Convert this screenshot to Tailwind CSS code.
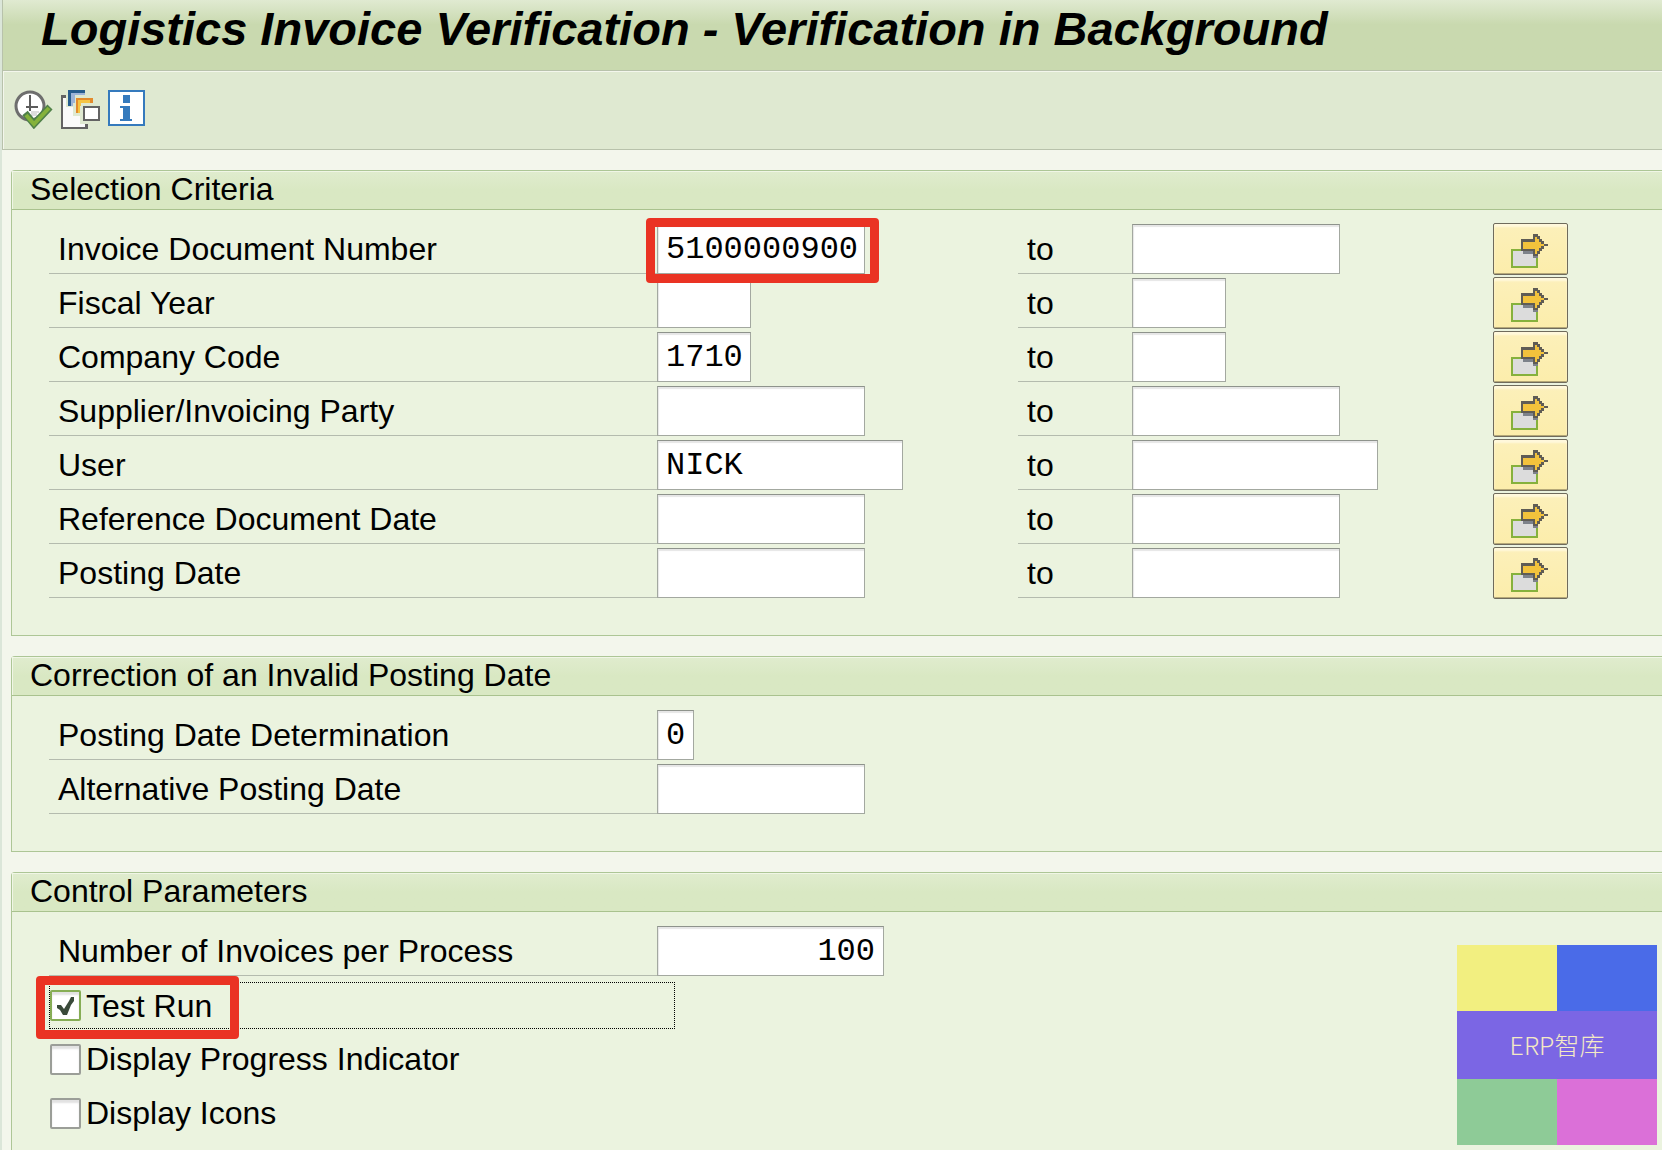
<!DOCTYPE html>
<html lang="en">
  <head>
    <meta charset="utf-8" />
    <title>Logistics Invoice Verification - Verification in Background</title>
    <script src="https://cdn.jsdelivr.net/npm/@tailwindcss/browser@4"></script>
  </head>

  <body class="relative min-h-screen flex flex-col overflow-x-hidden bg-[#f3f6ec] border-l-2 border-[#dbe6d9] text-black text-[32px] leading-[50px] font-['Liberation_Sans',Arial,sans-serif]">
    <!-- Title -->
    <header class="h-[71px] pl-[38px] border-l border-b border-[#b8c2ab] bg-linear-to-b from-[#e0ead1] to-[#c9d9af] to-35%">
      <h1 class="text-[47px] leading-[58px] font-bold italic whitespace-nowrap">Logistics Invoice Verification - Verification in Background</h1>
    </header>

    <!-- Toolbar -->
    <div class="h-[79px] pl-[11px] pt-[19px] flex items-start gap-2 border-l border-b border-[#b8c2ab] bg-[#dfe9d1] shadow-[inset_1px_1px_0_#f3f6ec]">
      <button aria-label="Execute">
        <svg class="block w-[39px] h-[39px]" viewBox="0 0 39 39">
          <circle cx="16" cy="16" r="14" fill="#fff" stroke="#6e6e6e" stroke-width="3" />
          <path d="M17 21h8v2h-2v3h-6z" fill="#ddd" />
          <path d="M15 5h2v11h7v2h-7v3h-2v-3h-3v-2h3z" fill="#5c5c5c" />
          <path d="M11 23l9 11L36 17" fill="none" stroke="#4f8049" stroke-width="7" />
          <path d="M12 25l8 9L35 18" fill="none" stroke="#85b23b" stroke-width="4" />
        </svg>
      </button>
      <button aria-label="Get variant">
        <svg class="block w-[39px] h-[39px]" viewBox="0 0 39 39" shape-rendering="crispEdges">
          <path d="M2 8h3v9h7v9h7v8h5v3H2z" fill="#fafafa" />
          <path d="M0 5h5v3H2v29h22v-3h3v5H0z" fill="#636363" />
          <path d="M7 0h17v3H10v13H7z" fill="#275d8e" />
          <path d="M10 3h14v2H14v8h-2v3h-2z" fill="#9db4d8" />
          <path d="M15 8h17v5h-3v-3H17v13h-2z" fill="#e38b2c" />
          <path d="M17 10h12v3h-9v3h-1v7h-2z" fill="#f5c544" />
          <path d="M23 17h15v13H23z" fill="#fff" stroke="#636363" stroke-width="2" />
        </svg>
      </button>
      <button aria-label="Information">
        <svg class="block w-[37px] h-[36px]" viewBox="0 0 37 36" shape-rendering="crispEdges">
          <path d="M1 1h35v34H1z" fill="#fff" stroke="#357abd" stroke-width="2" />
          <path d="M15 5h7v8h-7zM12 16h10v13h2v2H12v-2h3V18h-3z" fill="#357abd" />
        </svg>
      </button>
    </div>

    <main class="flex-1 flex flex-col gap-5 pl-[9px] pt-5">
      <!-- Selection criteria -->
      <section class="border-l border-y border-[#adc696] rounded-tl-sm bg-[#ebf3df]">
        <h2 class="h-[39px] pl-[18px] leading-[36px] border-b border-[#a9c28e] bg-linear-to-b from-[#e0ecce] to-[#d9e8c3] to-50% shadow-[inset_1px_1px_0_#f0f6e6]">Selection Criteria</h2>
        <div id="criteria" class="pl-[37px] pt-[14px] pb-[37px] flex flex-col gap-1"></div>
      </section>

      <!-- Correction of posting date -->
      <section class="border-l border-y border-[#adc696] rounded-tl-sm bg-[#ebf3df]">
        <h2 class="h-[39px] pl-[18px] leading-[36px] border-b border-[#a9c28e] bg-linear-to-b from-[#e0ecce] to-[#d9e8c3] to-50% shadow-[inset_1px_1px_0_#f0f6e6]">Correction of an Invalid Posting Date</h2>
        <div class="pl-[37px] pt-[14px] pb-[37px] flex flex-col gap-1">
          <div class="flex h-[50px]">
            <label for="determination" class="w-[608px] pl-[9px] border-b border-[#b4bbae]">Posting Date Determination</label>
            <input id="determination" value="0" class="w-[37px] pl-2 pt-[2px] bg-white border border-[#a3a8a0] border-t-[#8e938c] shadow-[inset_1px_2px_1px_#e6e6e6] font-['Liberation_Mono',monospace] outline-none">
          </div>
          <div class="flex h-[50px]">
            <label for="alternative" class="w-[608px] pl-[9px] border-b border-[#b4bbae]">Alternative Posting Date</label>
            <input id="alternative" class="w-[208px] pl-2 pt-[2px] bg-white border border-[#a3a8a0] border-t-[#8e938c] shadow-[inset_1px_2px_1px_#e6e6e6] font-['Liberation_Mono',monospace] outline-none">
          </div>
        </div>
      </section>

      <!-- Control parameters -->
      <section class="flex-1 border-l border-t border-[#adc696] rounded-tl-sm bg-[#ebf3df]">
        <h2 class="h-[39px] pl-[18px] leading-[36px] border-b border-[#a9c28e] bg-linear-to-b from-[#e0ecce] to-[#d9e8c3] to-50% shadow-[inset_1px_1px_0_#f0f6e6]">Control Parameters</h2>
        <div class="pl-[37px] pt-[14px] pb-3 flex flex-col gap-1">
          <div class="flex h-[50px]">
            <label for="per-process" class="w-[608px] pl-[9px] border-b border-[#b4bbae]">Number of Invoices per Process</label>
            <input id="per-process" value="100" class="w-[227px] pr-2 pt-[2px] text-right bg-white border border-[#a3a8a0] border-t-[#8e938c] shadow-[inset_1px_2px_1px_#e6e6e6] font-['Liberation_Mono',monospace] outline-none">
          </div>
          <div class="relative h-[50px] w-[626px] py-[2px]">
            <div class="h-[47px] flex items-center border border-dotted border-black">
              <span class="relative">
                <input id="test-run" type="checkbox" checked class="peer block appearance-none w-[31px] h-[31px] rounded-xs border-2 border-[#86ad55] bg-white shadow-[inset_0_3px_2px_#e2e2e2]">
                <svg class="absolute left-[6px] top-[6px] w-[19px] h-[20px] pointer-events-none invisible peer-checked:visible" viewBox="0 0 19 20">
                  <path d="M1 9h4l3 4L13 5l2-4h3v4l-3 4-2 5-2 5H7l-3-5-3-2z" fill="#3a4a3a" />
                </svg>
              </span>
              <label for="test-run" class="pl-[5px] leading-[48px]">Test Run</label>
            </div>
            <!-- Highlight -->
            <div class="absolute -left-[13px] -top-1 w-[203px] h-[63px] border-9 border-[#ea3323] rounded pointer-events-none"></div>
          </div>
          <div class="h-[50px] pl-px flex items-center">
            <input id="progress" type="checkbox" class="appearance-none w-[31px] h-[31px] rounded-xs border-2 border-[#9b9e98] bg-white shadow-[inset_0_3px_2px_#e2e2e2]">
            <label for="progress" class="pl-[5px]">Display Progress Indicator</label>
          </div>
          <div class="h-[50px] pl-px flex items-center">
            <input id="icons" type="checkbox" class="appearance-none w-[31px] h-[31px] rounded-xs border-2 border-[#9b9e98] bg-white shadow-[inset_0_3px_2px_#e2e2e2]">
            <label for="icons" class="pl-[5px]">Display Icons</label>
          </div>
        </div>
      </section>
    </main>

    <!-- Watermark -->
    <div class="absolute right-[5px] bottom-[5px] w-[200px] h-[200px] grid grid-cols-2 grid-rows-[66px_68px_66px]">
      <div class="bg-[#f2ef80]"></div>
      <div class="bg-[#4a6be8]"></div>
      <div class="col-span-2 pb-[2px] flex items-center justify-center bg-[#7b66e4] text-[#f4e9c4] text-[25px] leading-none font-light font-['Noto_Sans_CJK_SC',sans-serif]">ERP智库</div>
      <div class="bg-[#8ecb97]"></div>
      <div class="bg-[#db70d8]"></div>
    </div>

    <script>
      const rows = [
        { id: 'invoice', label: 'Invoice Document Number', value: '5100000900', width: 'w-[208px]', marked: true },
        { id: 'year', label: 'Fiscal Year', value: '', width: 'w-[94px]' },
        { id: 'company', label: 'Company Code', value: '1710', width: 'w-[94px]' },
        { id: 'supplier', label: 'Supplier/Invoicing Party', value: '', width: 'w-[208px]' },
        { id: 'user', label: 'User', value: 'NICK', width: 'w-[246px]' },
        { id: 'doc-date', label: 'Reference Document Date', value: '', width: 'w-[208px]' },
        { id: 'posting-date', label: 'Posting Date', value: '', width: 'w-[208px]' },
      ];

      const field = "h-[50px] pl-2 pt-[2px] block bg-white border border-[#a3a8a0] border-t-[#8e938c] shadow-[inset_1px_2px_1px_#e6e6e6] font-['Liberation_Mono',monospace] outline-none";

      document.getElementById('criteria').innerHTML = rows.map(r => `
        <div class="flex h-[50px]">
          <label for="${r.id}-from" class="w-[608px] pl-[9px] border-b border-[#b4bbae]">${r.label}</label>
          <div class="relative w-[361px]">
            <input id="${r.id}-from" value="${r.value}" class="${field} ${r.width}">
            ${r.marked ? '<div class="absolute z-10 -left-[11px] -top-[6px] w-[233px] h-[65px] border-9 border-[#ea3323] rounded pointer-events-none"></div>' : ''}
          </div>
          <label for="${r.id}-to" class="w-[114px] pl-[9px] border-b border-[#b4bbae]">to</label>
          <div class="w-[361px]">
            <input id="${r.id}-to" class="${field} ${r.width}">
          </div>
          <button aria-label="Multiple selection" class="-my-px w-[75px] h-[52px] pt-1 pr-[2px] flex items-center justify-center rounded-xs border border-[#6f6b5c] bg-linear-to-b from-[#fcf0ba] to-[#fcedab] shadow-[inset_0_3px_2px_#fff8dc,inset_0_-1px_0_#b5a878]">
            <svg class="w-[37px] h-[34px]" viewBox="0 0 37 34" shape-rendering="crispEdges">
              <path d="M1 16h25v17H1z" fill="#dcdcdc" stroke="#86b13c" stroke-width="2" />
              <path d="M12 16h12v5h3v3h-5v-4H12z" fill="#7d828a" />
              <path d="M10 5h12V0h5v2h2v3h2v2h2v3h4v2h-4v3h-2v2h-2v3h-2v2h-5v-5H10z" fill="#5f5c55" />
              <path d="M12 8h12V3h2v2h2v3h2v2h3v2h-3v2h-2v3h-2v3h-2v-5H12z" fill="#f2c23c" />
            </svg>
          </button>
        </div>`).join('');
    </script>
  </body>
</html>
